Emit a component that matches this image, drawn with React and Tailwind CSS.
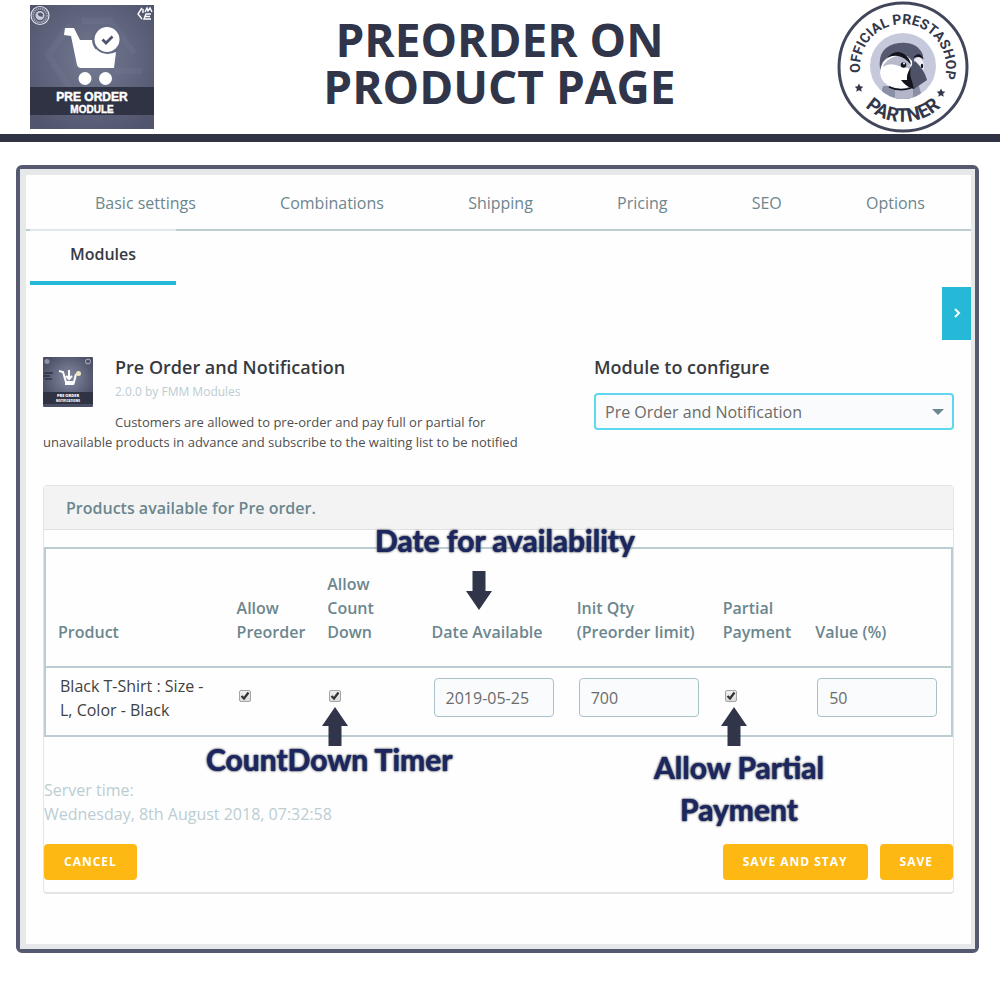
import React from "react";

const TABS = ["Basic settings", "Combinations", "Shipping", "Pricing", "SEO", "Options"];

function ModuleLogo() {
  return (
    <svg viewBox="0 0 124 124" className="h-[124px] w-[124px]" role="img" aria-label="Pre Order Module">
      <defs>
        <radialGradient id="moduleGlow" cx="50%" cy="45%" r="65%">
          <stop offset="0" stopColor="#747a92" />
          <stop offset="1" stopColor="#50556d" />
        </radialGradient>
      </defs>
      <rect width="124" height="124" fill="url(#moduleGlow)" />
      <g fill="none" stroke="#8086a0" strokeOpacity=".18" strokeWidth="6">
        <path d="M40 20 L18 50 L40 82" />
        <path d="M52 16 L80 16 L104 48" />
        <path d="M84 66 L112 66" />
      </g>
      <g fill="none" stroke="#dfe1ea">
        <circle cx="10" cy="10.500" r="9" strokeWidth="1.200" />
        <circle cx="10" cy="10.500" r="6.800" strokeWidth="2" strokeDasharray="1.200 .8" strokeOpacity=".6" />
      </g>
      <circle cx="10" cy="10.500" r="4.500" fill="#c9ccd9" />
      <path d="M7.500 9 Q10 6 13 9 L12.500 12 L9 11 Z" fill="#50556d" />
      <g fill="none" stroke="#fff" strokeWidth="1.400">
        <path d="M112 3 L108 9 L112 14 M113 4 L113 8" />
        <path d="M115 7 L117 3 L118 6 L120 3 L122 7" />
        <path d="M121 9 H116 L114 14 H121 M115.500 11.500 H120" />
      </g>
      <path d="M35 23 H44 L50 35 H83 L82 63 H51 Q48 63 47 60 L41 31 L34 30 Z" fill="#fff" />
      <circle cx="77" cy="34.500" r="15" fill="#646a83" />
      <path d="M66 44 Q74 52 86 47 L84 63 H66 Z" fill="#fff" />
      <circle cx="77" cy="34.500" r="12.500" fill="#fff" />
      <path d="M72.500 34.500 L76 38 L82.500 31.500" fill="none" stroke="#50556d" strokeWidth="2.800" />
      <circle cx="55" cy="73.500" r="6.500" fill="#fff" />
      <circle cx="75.500" cy="73.500" r="6.500" fill="#fff" />
      <rect y="82" width="124" height="28" fill="#2f3343" />
      <g fill="#fff" textAnchor="middle" fontFamily="Liberation Sans, sans-serif" fontWeight="700">
        <text x="62" y="96" fontSize="12" stroke="#fff" strokeWidth=".5">PRE ORDER</text>
        <text x="62" y="108" fontSize="10" stroke="#fff" strokeWidth=".4">MODULE</text>
      </g>
    </svg>
  );
}

function PartnerBadge() {
  return (
    <svg viewBox="0 0 132 132" className="h-[132px] w-[132px]" role="img" aria-label="Official PrestaShop Partner">
      <defs>
        <path id="badgeTop" d="M 23.900 74.900 A 43 43 0 1 1 106.400 80.700" />
        <path id="badgeBottom" d="M 12.900 80.200 A 55 55 0 0 0 119.100 80.200" />
        <clipPath id="badgeFace">
          <circle cx="66" cy="65" r="33" />
        </clipPath>
      </defs>
      <circle cx="66" cy="66" r="64" fill="#fff" stroke="#42465a" strokeWidth="3" />
      <circle cx="66" cy="65" r="33" fill="#c6c9db" />
      <g clipPath="url(#badgeFace)">
        <path d="M46 85 H82 L86 100 H42 Z" fill="#8a8fa5" />
        <path d="M58 88 H76 V100 H58 Z" fill="#b3b6c8" />
      </g>
      <path d="M43 68 Q40 45 62 42 Q80 40 86 54 L84 72 H50 Z" fill="#555a70" />
      <path d="M43 72 Q44 58 54 55 Q68 51 75 60 L76 84 Q66 90 55 86 Q44 82 43 72 Z" fill="#fff" />
      <path d="M50 60 Q60 52 68 57 Q73 61 74 68 Q66 66 62 65 Q52 61 46 66 Q47 62 50 60 Z" fill="#b6bacc" />
      <path d="M49 58 Q58 47 67 53 Q73 57 74 64 Q68 56 61 55 Q54 54 49 58 Z" fill="#12131b" />
      <path d="M77 58 Q83 53 86 60 Q88 66 86 71 L78 64 Z" fill="#eceef4" />
      <path d="M76 57 Q82 49 87 58 Q81 54 76 57 Z" fill="#12131b" />
      <circle cx="66.500" cy="64" r="2.800" fill="#12131b" />
      <circle cx="67" cy="62.500" r="1" fill="#fff" />
      <ellipse cx="85" cy="65" rx="1.200" ry="2.300" fill="#12131b" />
      <path d="M78 60 Q71 68 70 77 Q73 85 77 88 L90 79 Q87 68 78 60 Z" fill="#4d5268" />
      <path d="M74 66 Q69 74 70 79 L64 79 Q69 86 77 88 L75 80 Q72 74 74 66 Z" fill="#12131b" />
      <path d="M52 86 Q63 91 74 87" fill="none" stroke="#12131b" strokeWidth="1.500" />
      <g fill="#33374a" fontFamily="Roboto, sans-serif" fontWeight="700" textAnchor="middle">
        <text fontSize="14">
          <textPath href="#badgeTop" startOffset="50%">OFFICIAL PRESTASHOP</textPath>
        </text>
        <text fontSize="19">
          <textPath href="#badgeBottom" startOffset="50%">PARTNER</textPath>
        </text>
      </g>
      <g fill="#33374a">
        <path d="M22 82.500 L23.300 85.300 L26.300 85.700 L24.100 87.700 L24.700 90.700 L22 89.200 L19.300 90.700 L19.900 87.700 L17.700 85.700 L20.700 85.300 Z" />
        <path d="M104 87.500 L105.300 90.300 L108.300 90.700 L106.100 92.700 L106.700 95.700 L104 94.200 L101.300 95.700 L101.900 92.700 L99.700 90.700 L102.700 90.300 Z" />
      </g>
    </svg>
  );
}

function ModuleThumb() {
  return (
    <svg viewBox="0 0 50 50" className="float-left mr-[22px] mb-4 h-[50px] w-[50px]" role="img" aria-label="Pre Order and Notification">
      <defs>
        <radialGradient id="thumbGlow" cx="52%" cy="42%" r="55%">
          <stop offset="0" stopColor="#858ba3" />
          <stop offset="1" stopColor="#4a4f66" />
        </radialGradient>
      </defs>
      <rect width="50" height="50" rx="1" fill="url(#thumbGlow)" />
      <circle cx="4" cy="4.500" r="2.500" fill="#8d92a8" />
      <circle cx="45" cy="4.500" r="2.500" fill="none" stroke="#b6bacb" />
      <path d="M1 16 H10 M0 19 H7 M2 22 H9" stroke="#2f3343" strokeWidth="1.600" />
      <path d="M16 14 L20 15 L23 25 H31 L33 17 M26 13 V21 M23 19 L26 22 L29 19" fill="none" stroke="#fff" strokeWidth="2" />
      <path d="M22 25 H32 L31 28 H22 Z" fill="#fff" />
      <circle cx="35.500" cy="16.500" r="2.500" fill="#efe6c4" />
      <rect y="35" width="50" height="12" fill="#2f3343" />
      <g fill="#fff" textAnchor="middle" fontFamily="Open Sans, sans-serif" fontWeight="800">
        <text x="25" y="40" fontSize="4">PRE ORDER</text>
        <text x="25" y="45" fontSize="3">NOTIFICATIONS</text>
      </g>
    </svg>
  );
}

function Arrow({ className }) {
  return (
    <svg viewBox="0 0 26 39" className={`h-[39px] w-[26px] ${className}`} aria-hidden="true">
      <path d="M13 0 L26 19 H19.500 V39 H6.500 V19 H0 Z" fill="#30354a" />
    </svg>
  );
}

function Tick({ label }) {
  return (
    <span className="grid h-3 w-3">
      <input
        type="checkbox"
        defaultChecked
        aria-label={label}
        className="peer col-start-1 row-start-1 h-3 w-3 appearance-none rounded-xs border border-[#a5a5a5] bg-linear-to-b from-[#f0f0f0] to-[#dcdcdc]"
      />
      <svg viewBox="0 0 12 12" className="pointer-events-none invisible col-start-1 row-start-1 h-3 w-3 peer-checked:visible" aria-hidden="true">
        <path d="M2.500 6 L5 8.500 L9.500 2.500" fill="none" stroke="#333" strokeWidth="2.200" />
      </svg>
    </span>
  );
}

function Field({ label, value }) {
  return (
    <input
      type="text"
      aria-label={label}
      defaultValue={value}
      className="block h-[39px] w-[120px] rounded border border-[#a9c2c9] bg-[#fafbfc] px-[11px] text-base text-[#6b6b6b]"
    />
  );
}

const NOTE =
  "absolute text-center font-['Lato',sans-serif] text-3xl font-bold text-[#1c2760] [text-shadow:0_0_1px_#1c2760,0_0_2px_#777,0_0_3px_#888]";
const BUTTON = "h-9 rounded bg-[#fdb813] px-5 text-xs font-bold tracking-[1px] text-white";

export default function App() {
  return (
    <div className="min-h-screen bg-white pb-12 font-['Open_Sans',sans-serif] text-[#414141]">
      <header className="grid grid-cols-[1fr_auto_1fr] items-center border-b-8 border-[#2f3343] py-px pr-[31px] pl-[30px]">
        <ModuleLogo />
        <h1 className="pb-2 text-center text-[46px] leading-[47px] font-bold text-[#30354a]">
          PREORDER ON
          <br />
          PRODUCT PAGE
        </h1>
        <div className="flex justify-end">
          <PartnerBadge />
        </div>
      </header>

      <main className="mt-[23px] mr-[21px] ml-4 rounded-md border-4 border-[#555a70]">
        <div className="border-t-6 border-r-4 border-b-5 border-l-6 border-[#e7e8ea] bg-[#fefefe] pb-[50px]">
          <nav aria-label="Product sections">
            <div className="flex h-14 items-center justify-between border-b-2 border-[#bbcdd2] pt-0.5 pr-[46px] pl-[69px]">
              {TABS.map((tab) => (
                <a key={tab} href="#" className="text-base text-[#6c868e]">
                  {tab}
                </a>
              ))}
            </div>
            <a
              href="#"
              aria-current="page"
              className="relative -mt-0.5 ml-1 flex h-14 w-[146px] items-center justify-center border-t-2 border-b-4 border-t-[#dfe8ea] border-b-[#25b9d7] pb-1 text-base font-semibold text-[#363a41]"
            >
              Modules
            </a>
          </nav>

          <button type="button" aria-label="Next" className="mt-0.5 ml-auto flex h-[53px] w-[29px] items-center justify-center bg-[#25b9d7] pb-0.5">
            <svg viewBox="0 0 8 10" className="h-2.5 w-2" aria-hidden="true">
              <path d="M2 1 L6 5 L2 9" fill="none" stroke="#fff" strokeWidth="2" />
            </svg>
          </button>

          <div className="mt-[17px] mr-[17px] ml-[17px]">
            <section className="flex items-start justify-between">
              <div className="w-[500px]">
                <ModuleThumb />
                <h2 className="text-lg leading-5 font-semibold text-[#363a41]">Pre Order and Notification</h2>
                <p className="mt-[5px] text-xs leading-5 text-[#bbcdd2]">2.0.0 by FMM Modules</p>
                <p className="mt-2.5 text-[13px] leading-5 text-[#4f4f4f]">
                  Customers are allowed to pre-order and pay full or partial for unavailable products in advance and subscribe to the waiting list to be notified
                </p>
              </div>
              <div className="w-[360px]">
                <label htmlFor="module" className="block text-lg leading-5 font-semibold text-[#363a41]">
                  Module to configure
                </label>
                <div className="relative mt-4">
                  <select
                    id="module"
                    className="h-[37px] w-full appearance-none rounded border-2 border-[#5fd7f0] bg-[#fafbfc] px-[9px] text-base text-[#6b6b6b]"
                  >
                    <option>Pre Order and Notification</option>
                  </select>
                  <svg viewBox="0 0 12 6" className="pointer-events-none absolute top-4 right-2.5 h-1.5 w-3" aria-hidden="true">
                    <path d="M0 0 H12 L6 6 Z" fill="#6c868e" />
                  </svg>
                </div>
              </div>
            </section>

            <section className="mt-[33px] rounded border border-b-2 border-[#e4e6e6] pb-3">
              <h3 className="flex h-11 items-center border-b border-[#dfe1e1] bg-[#f3f3f3] px-[22px] text-base font-semibold text-[#6c868e]">
                Products available for Pre order.
              </h3>

              <div className="relative mt-[17px]">
                <table className="w-full table-fixed border-collapse border-2 border-[#bbcdd2] text-left text-base leading-6">
                  <colgroup>
                    <col className="w-[19.8%]" />
                    <col className="w-[10%]" />
                    <col className="w-[11.5%]" />
                    <col className="w-[16%]" />
                    <col className="w-[16.1%]" />
                    <col className="w-[10.2%]" />
                    <col />
                  </colgroup>
                  <thead className="border-b-2 border-[#bbcdd2] align-bottom text-[#6c868e]">
                    <tr className="h-[119px]">
                      <th className="px-3 pb-[22px] font-semibold">Product</th>
                      <th className="pb-[22px] pl-3 font-semibold">
                        Allow
                        <br />
                        Preorder
                      </th>
                      <th className="pb-[22px] pl-3 font-semibold">
                        Allow
                        <br />
                        Count
                        <br />
                        Down
                      </th>
                      <th className="pb-[22px] pl-3 font-semibold">Date Available</th>
                      <th className="pb-[22px] pl-3 font-semibold">
                        Init Qty
                        <br />
                        (Preorder limit)
                      </th>
                      <th className="pb-[22px] pl-3 font-semibold">
                        Partial
                        <br />
                        Payment
                      </th>
                      <th className="pb-[22px] pl-3 font-semibold">Value (%)</th>
                    </tr>
                  </thead>
                  <tbody>
                    <tr className="h-[69px]">
                      <td className="pb-2 pl-3.5">
                        Black T-Shirt : Size -
                        <br />
                        L, Color - Black
                      </td>
                      <td className="pb-3 pl-3.5">
                        <Tick label="Allow Preorder" />
                      </td>
                      <td className="pb-3 pl-3.5">
                        <Tick label="Allow Count Down" />
                      </td>
                      <td className="pb-2 pl-3.5">
                        <Field label="Date Available" value="2019-05-25" />
                      </td>
                      <td className="pb-2 pl-3.5">
                        <Field label="Init Qty" value="700" />
                      </td>
                      <td className="pb-3 pl-3.5">
                        <Tick label="Partial Payment" />
                      </td>
                      <td className="pb-2 pl-3.5">
                        <Field label="Value" value="50" />
                      </td>
                    </tr>
                  </tbody>
                </table>

                <p className={`${NOTE} top-[-25px] left-[331px] leading-9`}>Date for availability</p>
                <Arrow className="absolute top-6 left-[422px] rotate-180" />
                <Arrow className="absolute top-40 left-[278px]" />
                <p className={`${NOTE} top-[194px] left-[162px] leading-9`}>CountDown Timer</p>
                <Arrow className="absolute top-40 left-[677px]" />
                <p className={`${NOTE} top-[199px] left-[610px] leading-[42px]`}>
                  Allow Partial
                  <br />
                  Payment
                </p>
              </div>

              <p className="mt-[41px] text-base leading-6 text-[#bbcdd2]">
                Server time:
                <br />
                Wednesday, 8th August 2018, 07:32:58
              </p>

              <div className="mt-[18px] flex gap-3">
                <button type="button" className={`${BUTTON} mr-auto`}>
                  CANCEL
                </button>
                <button type="button" className={BUTTON}>
                  SAVE AND STAY
                </button>
                <button type="button" className={BUTTON}>
                  SAVE
                </button>
              </div>
            </section>
          </div>
        </div>
      </main>
    </div>
  );
}
